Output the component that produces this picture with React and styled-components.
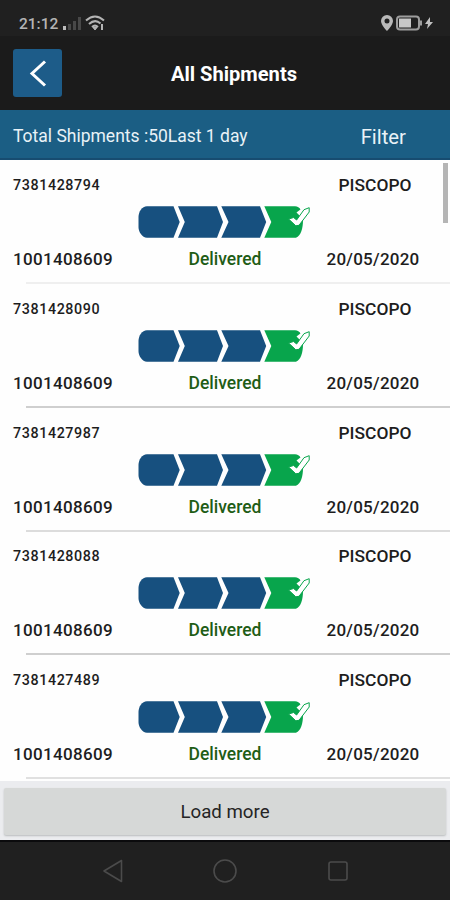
import styled, { createGlobalStyle } from 'styled-components';

const GlobalStyle = createGlobalStyle`
  * {
    box-sizing: border-box;
  }

  body {
    margin: 0;
    background: #fff;
    font-family: Roboto, "Liberation Sans", sans-serif;
  }
`;

const Screen = styled.div`
  display: flex;
  flex-direction: column;
  width: 450px;
  height: 900px;
  overflow: hidden;
  background: #fefefe;
`;

const StatusBar = styled.div`
  display: flex;
  justify-content: space-between;
  height: 36px;
  padding: 10px 17px 0 19px;
  background: #202020;
  color: #b4b4b4;
`;

const StatusGroup = styled.div`
  display: flex;
  align-items: center;
  height: 26px;
  gap: ${(props) => props.$gap}px;
`;

const Clock = styled.span`
  width: 39px;
  padding-top: 1px;
  font-size: 15.5px;
  font-weight: 500;
  white-space: nowrap;
`;

const Header = styled.header`
  display: grid;
  grid-template-columns: 49px 1fr 44px;
  align-items: center;
  height: 74px;
  padding: 0 0 0 13px;
  background: #1b1b1b;
`;

const BackButton = styled.button`
  display: flex;
  align-items: center;
  justify-content: center;
  width: 49px;
  height: 48px;
  padding: 0;
  border: 0;
  border-radius: 3px;
  background: #1d5c89;
`;

const Title = styled.h1`
  margin: 0;
  padding-top: 2px;
  color: #fff;
  font-size: 20.1px;
  font-weight: 700;
  line-height: 24px;
  text-align: center;
`;

const FilterBar = styled.div`
  display: flex;
  justify-content: space-between;
  height: 50px;
  padding: 0 44px 0 13px;
  border-bottom: 2px solid #174c70;
  background: #1b5e84;
  color: #e9f2f7;
`;

const Summary = styled.span`
  font-size: 17.5px;
  line-height: 53px;
`;

const FilterLink = styled.span`
  font-size: 20.3px;
  line-height: 54px;
`;

const List = styled.div`
  position: relative;
  height: 621px;
  overflow: hidden;
`;

const ScrollThumb = styled.div`
  position: absolute;
  top: 3px;
  right: 2px;
  width: 5px;
  height: 60px;
  background: #b5b5b5;
`;

const Row = styled.div`
  height: 123.75px;
  padding-top: 15px;
`;

const Line = styled.div`
  display: grid;
  grid-template-columns: 150px 150px 150px;
  height: 20px;
  line-height: 20px;
  font-weight: 500;
  color: #1d1d1d;
`;

const Reference = styled.span`
  padding-left: 13px;
  font-size: 14.3px;
  letter-spacing: 0.6px;
  line-height: 21px;
`;

const Account = styled.span`
  padding-left: 13px;
  font-size: 17px;
  letter-spacing: 0.35px;
`;

const Customer = styled.span`
  grid-column: 3;
  font-size: 17.4px;
  text-align: center;
`;

const Status = styled.span`
  color: #1f5d16;
  font-size: 17.5px;
  line-height: 21px;
  text-align: center;
`;

const ShipDate = styled.span`
  padding-right: 4px;
  font-size: 17px;
  letter-spacing: 0.25px;
  text-align: center;
`;

const Track = styled.svg`
  display: block;
  width: 180px;
  height: 36px;
  margin: 9px 0 9px 135px;
`;

const Divider = styled.div`
  height: 2px;
  margin: 13px 0 0 26px;
  background: ${(props) => props.$color};
`;

const Footer = styled.div`
  height: 59px;
  padding: 7px 4px 5px;
  background: #ebecef;
`;

const LoadMore = styled.button`
  display: block;
  width: 100%;
  height: 47px;
  padding: 0;
  border: 0;
  border-radius: 2px;
  background: #d6d8d7;
  box-shadow: 0 1px 2px #b9bcbd;
  color: #252525;
  font-family: inherit;
  font-size: 18.7px;
`;

const NavBar = styled.nav`
  display: flex;
  align-items: center;
  justify-content: center;
  gap: 89px;
  height: 60px;
  border-top: 2px solid #0b0b0d;
  background: #202020;
`;

const shipments = [
  { reference: '7381428794', divider: '#efefef' },
  { reference: '7381428090', divider: '#cfcfcf' },
  { reference: '7381427987', divider: '#dcdcdc' },
  { reference: '7381428088', divider: '#cfcfcf' },
  { reference: '7381427489', divider: '#e0e0e0' },
];

const SignalIcon = () => (
  <svg width="20" height="14" viewBox="0 0 20 14">
    <path d="M1 10h3v4H1z" fill="#bcbcbc" />
    <path d="M6 8h3v6H6zM11 5h3v9h-3zM16 1h3v13h-3z" fill="#484848" />
  </svg>
);

const WifiIcon = () => (
  <svg width="20" height="16" viewBox="0 0 20 16" fill="none" stroke="#b4b4b4" strokeWidth="2">
    <path d="M1 5.500Q10-2.500 19 5.500M4 9Q10 3.500 15.500 8.500M7 12q3-2.800 6 0" />
    <path d="M8 12.500h4L10 15z" fill="#b4b4b4" strokeWidth="1" />
    <path d="M17 9v6" />
  </svg>
);

const LocationIcon = () => (
  <svg width="12" height="16" viewBox="0 0 12 16">
    <path
      fill="#b9b9b9"
      fillRule="evenodd"
      d="M6 0a6 6 0 0 0-6 6c0 4 6 10 6 10s6-6 6-10a6 6 0 0 0-6-6zm0 3.500a2.500 2.500 0 1 1 0 5 2.500 2.500 0 0 1 0-5z"
    />
  </svg>
);

const BatteryIcon = () => (
  <svg width="26" height="16" viewBox="0 0 26 16">
    <rect x="1" y="1.500" width="22" height="13" rx="3" fill="#202020" stroke="#9d9d9d" strokeWidth="2" />
    <path d="M3 3.500h12v9H3z" fill="#c7c7c7" />
    <path d="M24 5.500h2v5h-2z" fill="#9d9d9d" />
  </svg>
);

const BoltIcon = () => (
  <svg width="8" height="12" viewBox="0 0 8 12">
    <path d="M5 0 0 7h3l-1 5 6-7H5z" fill="#c0c0c0" />
  </svg>
);

const ProgressTrack = () => (
  <Track viewBox="135 204 180 36">
    <path d="M147 206.300h26.500l6.200 15.700-6.200 15.700H147c-5 0-8.500-6-8.500-10.700v-10c0-5 3.500-10.700 8.500-10.700z" fill="#17507f" />
    <path d="M178 206.300h39l6 15.700-6 15.700h-39l6.800-15.700z" fill="#17507f" />
    <path d="M221.300 206.300h38.700l6.200 15.700-6.200 15.700h-38.700l7.200-15.700z" fill="#17507f" />
    <path d="M264.300 206.300H295c5 0 8 5 8 14 0 8-2 15.500-7 17.400h-31.700l7-15.700z" fill="#08a54c" />
    <path d="m296.500 212.500 8.500-6.500h6v6l-7 8z" fill="#fefefe" />
    <path
      d="m288.600 219 5-1.500 3 2.500 7.400-10.300 5.200-2v4.300l-10.200 13.300-3.200.5z"
      fill="#fff"
      stroke="#08a54c"
      strokeWidth="1"
      strokeLinejoin="round"
    />
  </Track>
);

const App = () => {
  return (
    <>
      <GlobalStyle />
      <Screen>
        <StatusBar>
          <StatusGroup $gap={3.5}>
            <Clock>21:12</Clock>
            <SignalIcon />
            <WifiIcon />
          </StatusGroup>
          <StatusGroup $gap={3}>
            <LocationIcon />
            <BatteryIcon />
            <BoltIcon />
          </StatusGroup>
        </StatusBar>
        <Header>
          <BackButton aria-label="Back">
            <svg width="18" height="28" viewBox="0 0 18 28">
              <path
                d="M16 2.500 3 14.500l13 12"
                fill="none"
                stroke="#fff"
                strokeWidth="3"
              />
            </svg>
          </BackButton>
          <Title>All Shipments</Title>
        </Header>
        <FilterBar>
          <Summary>Total Shipments :50Last 1 day</Summary>
          <FilterLink>Filter</FilterLink>
        </FilterBar>
        <List>
          {shipments.map((shipment) => (
            <Row key={shipment.reference}>
              <Line>
                <Reference>{shipment.reference}</Reference>
                <Customer>PISCOPO</Customer>
              </Line>
              <ProgressTrack />
              <Line>
                <Account>1001408609</Account>
                <Status>Delivered</Status>
                <ShipDate>20/05/2020</ShipDate>
              </Line>
              <Divider $color={shipment.divider} />
            </Row>
          ))}
          <ScrollThumb />
        </List>
        <Footer>
          <LoadMore>Load more</LoadMore>
        </Footer>
        <NavBar>
          <svg width="24" height="24" viewBox="0 0 24 24" fill="none" stroke="#4b4b4b" strokeWidth="1.6">
            <path d="M21.500 1.500v21L4 12z" strokeLinejoin="round" />
          </svg>
          <svg width="24" height="24" viewBox="0 0 24 24" fill="none" stroke="#4b4b4b" strokeWidth="1.6">
            <circle cx="12" cy="12" r="11" />
          </svg>
          <svg width="24" height="24" viewBox="0 0 24 24" fill="none" stroke="#4b4b4b" strokeWidth="1.6">
            <rect x="3" y="3" width="18" height="18" rx="2" />
          </svg>
        </NavBar>
      </Screen>
    </>
  );
};

export default App;
